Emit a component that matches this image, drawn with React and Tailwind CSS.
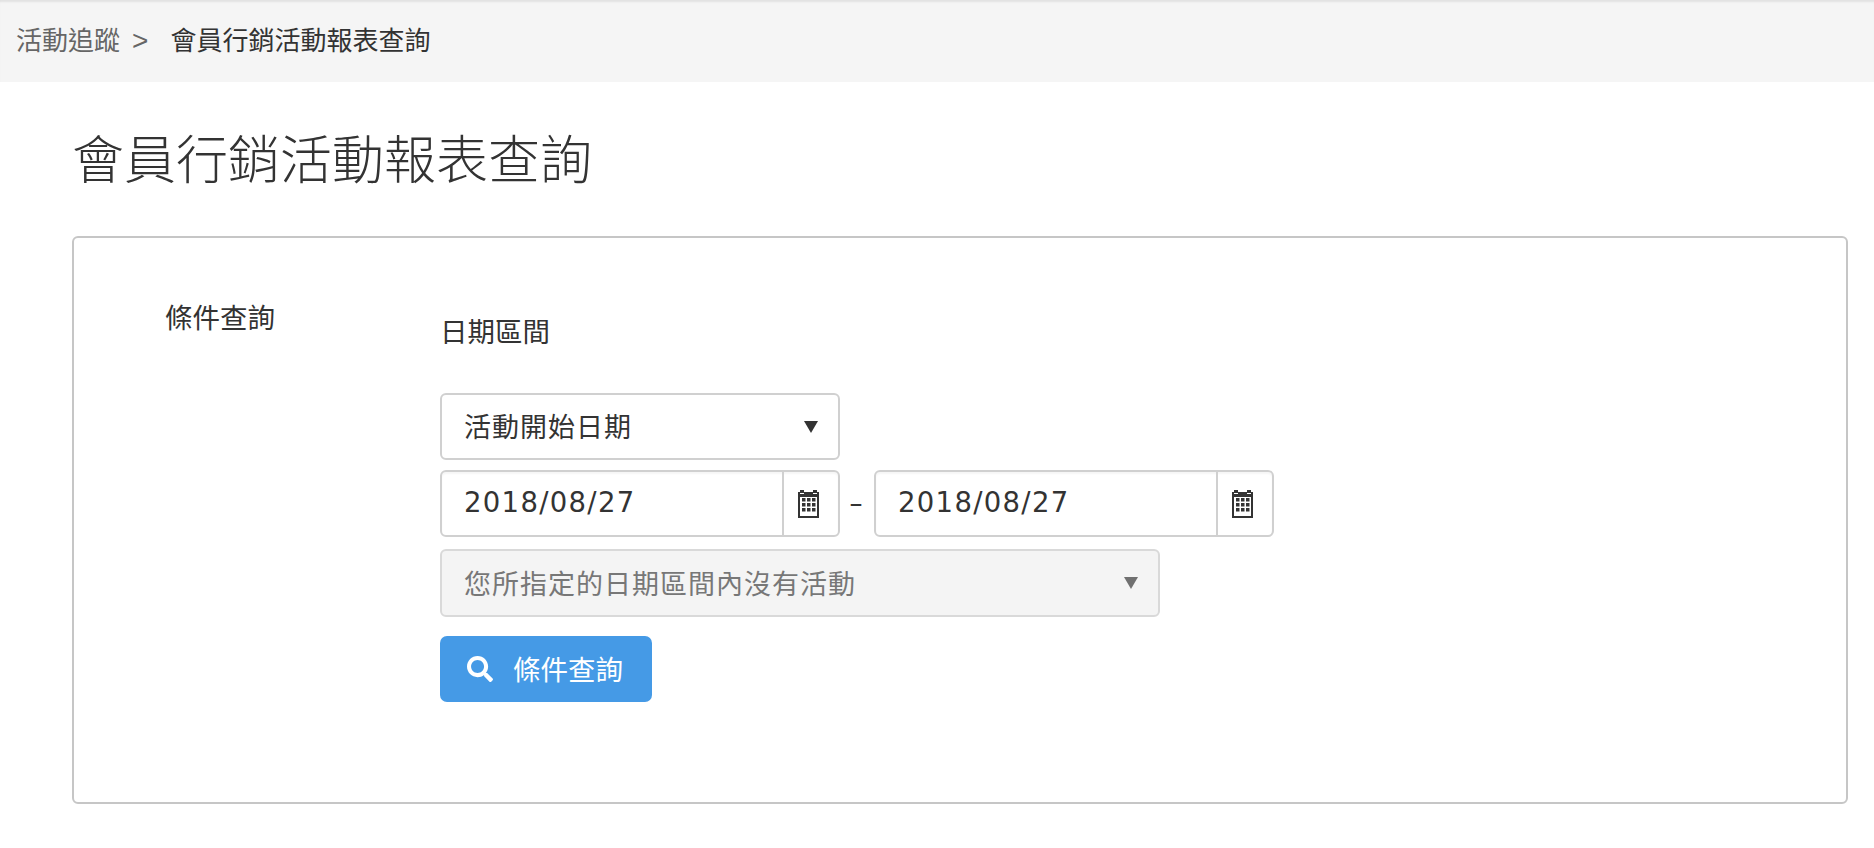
import React from "react";
import { FaSearch } from "react-icons/fa";

const font = { fontFamily: '"DejaVu Sans", "Noto Sans CJK TC", sans-serif' };
const cjk = { fontFamily: '"Noto Sans CJK TC", sans-serif' };

function Calendar() {
  return (
    <svg width="21" height="28" viewBox="0 0 21 28" fill="#333">
      <rect x="2" y="0" width="4" height="3" />
      <rect x="15" y="0" width="4" height="3" />
      <path fillRule="evenodd" d="M0 2h2v2h4V2h9v2h4V2h2v26H0zM2 7v19h17V7z" />
      {[8, 13, 18].map((y) =>
        [4, 9, 14].map((x) => <rect key={`${x}-${y}`} x={x} y={y} width="3.5" height="3.5" />)
      )}
    </svg>
  );
}

function Caret({ color }) {
  return (
    <svg width="14" height="12" viewBox="0 0 14 12">
      <polygon points="0,0 14,0 7,12" fill={color} />
    </svg>
  );
}

function DateInput() {
  return (
    <div className="flex h-[67px] flex-1 rounded-[6px] border-2 border-[#d0d0d0] bg-white shadow-[inset_0_2px_2px_rgba(0,0,0,0.04)]">
      <div className="flex flex-1 items-center pb-[1px] pl-[22px] text-[27.5px] tracking-[1.3px] text-[#333]">2018/08/27</div>
      <div className="flex w-[56px] items-center justify-center border-l-2 border-[#d0d0d0] pr-[5px]">
        <Calendar />
      </div>
    </div>
  );
}

export default function App() {
  return (
    <div className="min-h-[848px] bg-white" style={font}>
      <div className="flex h-[82px] items-center bg-[#f5f5f5] pb-[5px] pl-[16px] text-[26px] shadow-[inset_0_3px_2px_-1px_rgba(0,0,0,0.08)]" style={cjk}>
        <span className="text-[#666]">活動追蹤</span>
        <span className="ml-[12px] translate-y-[2px] text-[28px] text-[#666]" style={{ fontFamily: '"Liberation Sans", sans-serif' }}>&gt;</span>
        <span className="ml-[22px] text-[#333]">會員行銷活動報表查詢</span>
      </div>

      <div className="pl-[72px] pr-[26px]">
        <h1 className="flex h-[154px] items-center pb-[5px] text-[52px] font-light leading-none text-[#333]" style={cjk}>會員行銷活動報表查詢</h1>

        <div className="flex h-[568px] rounded-[6px] border-2 border-[#c6c6c6] pl-[91px] pt-[59px]">
          <div className="w-[275px] text-[27.5px] leading-[38px] text-[#333]" style={cjk}>條件查詢</div>

          <div className="flex w-[834px] flex-col pt-[14px]">
            <div className="h-[82px] text-[27.5px] leading-[38px] text-[#333]" style={cjk}>日期區間</div>

            <div className="flex h-[67px] w-[400px] items-center justify-between rounded-[6px] border-2 border-[#d0d0d0] bg-white pl-[22px] pr-[20px] text-[27px] tracking-[1px] text-[#333]" style={cjk}>
              <span>活動開始日期</span>
              <Caret color="#333" />
            </div>

            <div className="mt-[10px] flex w-[834px] items-center">
              <DateInput />
              <div className="w-[34px] pr-[2px] text-center text-[26px] text-[#333]">–</div>
              <DateInput />
            </div>

            <div className="mt-[12px] flex h-[68px] w-[720px] items-center justify-between rounded-[6px] border-2 border-[#d9d9d9] bg-[#f4f4f4] pl-[22px] pr-[20px] text-[27px] tracking-[1px] text-[#777]" style={cjk}>
              <span>您所指定的日期區間內沒有活動</span>
              <Caret color="#707070" />
            </div>

            <button className="mt-[19px] flex h-[66px] w-[212px] items-center rounded-[7px] bg-[#459ae6] pl-[27px] text-[27.5px] text-white" style={cjk}>
              <FaSearch size={26} />
              <span className="ml-[20px]">條件查詢</span>
            </button>
          </div>
        </div>
      </div>
    </div>
  );
}
